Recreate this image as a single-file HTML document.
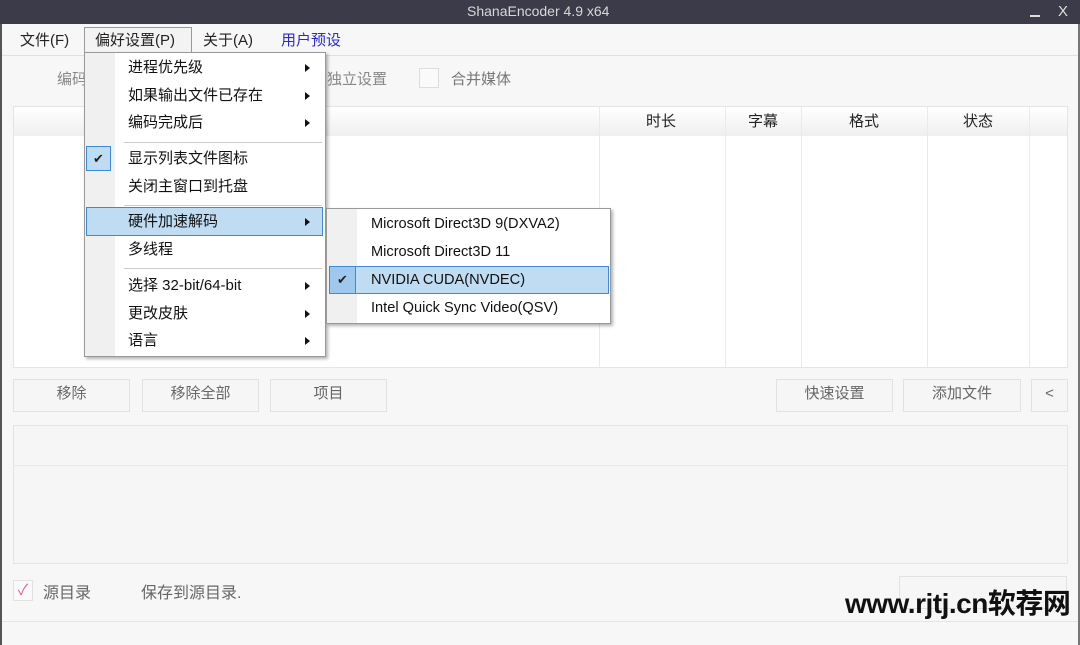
<!DOCTYPE html>
<html><head><meta charset="utf-8"><style>
*{margin:0;padding:0;box-sizing:border-box}
body{width:1080px;height:645px;background:#f7f7f7;font-family:"Liberation Sans","Noto Sans CJK SC",sans-serif;position:relative;overflow:hidden;color:#222}
.a{position:absolute}
.t{font-size:15px;white-space:nowrap}
.btn{position:absolute;top:379px;height:33px;border:1px solid #e2e2e2;background:#f6f6f6;color:#666;font-size:15px;text-align:center;line-height:28px}
.mi{position:absolute;left:128px;font-size:15px;color:#111;white-space:nowrap}
.ar{position:absolute;left:305px;width:0;height:0;border-top:4px solid transparent;border-bottom:4px solid transparent;border-left:5px solid #111}
.sep{position:absolute;left:124px;width:198px;height:1px;background:#ccc}
.si{position:absolute;left:371px;font-size:14.6px;color:#111;white-space:nowrap}
.col{position:absolute;top:106px;width:1px;height:261px;background:#eaeaea}
.hd{position:absolute;top:110px;font-size:15px;color:#222}
</style></head><body>
<div class="a" style="left:0;top:0;width:1080px;height:24px;background:#3b3b49"></div>
<div class="a t" style="left:467px;top:3px;color:#d8d8d8;font-size:14px">ShanaEncoder 4.9 x64</div>
<div class="a" style="left:1030px;top:15px;width:10px;height:2px;background:#ddd"></div>
<div class="a t" style="left:1058px;top:3px;color:#ddd;font-size:15px">X</div>
<div class="a" style="left:0;top:24px;width:2px;height:621px;background:#555"></div>
<div class="a" style="left:1078px;top:24px;width:2px;height:621px;background:#777"></div>
<div class="a" style="left:2px;top:55px;width:1076px;height:1px;background:#e0e0e0"></div>
<div class="a t" style="left:20px;top:29px">文件(F)</div>
<div class="a" style="left:84px;top:27px;width:108px;height:26px;border:1px solid #999;border-bottom:none;background:#f3f3f3"></div>
<div class="a t" style="left:95px;top:29px">偏好设置(P)</div>
<div class="a t" style="left:203px;top:29px">关于(A)</div>
<div class="a t" style="left:281px;top:29px;color:#2a2ad0">用户预设</div>
<div class="a t" style="left:57px;top:68px;color:#888">编码</div>
<div class="a t" style="left:327px;top:68px;color:#888">独立设置</div>
<div class="a" style="left:419px;top:68px;width:20px;height:20px;border:1px solid #ddd;background:#fafafa"></div>
<div class="a t" style="left:451px;top:68px;color:#777">合并媒体</div>
<div class="a" style="left:13px;top:106px;width:1055px;height:262px;border:1px solid #e4e4e4;background:#fff"></div>
<div class="a" style="left:14px;top:107px;width:1053px;height:29px;background:linear-gradient(#fff,#efefef)"></div>
<div class="col" style="left:599px"></div><div class="col" style="left:725px"></div><div class="col" style="left:801px"></div><div class="col" style="left:927px"></div><div class="col" style="left:1029px"></div>
<div class="hd" style="left:646px">时长</div><div class="hd" style="left:748px">字幕</div><div class="hd" style="left:849px">格式</div><div class="hd" style="left:963px">状态</div>
<div class="btn" style="left:13px;width:117px">移除</div>
<div class="btn" style="left:142px;width:117px">移除全部</div>
<div class="btn" style="left:270px;width:117px">项目</div>
<div class="btn" style="left:776px;width:117px">快速设置</div>
<div class="btn" style="left:903px;width:118px">添加文件</div>
<div class="btn" style="left:1031px;width:37px">&lt;</div>
<div class="a" style="left:13px;top:425px;width:1055px;height:139px;border:1px solid #e4e4e4;background:#f6f6f6"></div>
<div class="a" style="left:14px;top:465px;width:1053px;height:1px;background:#e8e8e8"></div>
<div class="a" style="left:13px;top:580px;width:20px;height:21px;border:1px solid #e2e2e2;background:#fafafa;color:#e060a0;font-size:15px;text-align:center;line-height:19px">✓</div>
<div class="a t" style="left:43px;top:579px;color:#666;font-size:16px">源目录</div>
<div class="a t" style="left:141px;top:579px;color:#666;font-size:16px">保存到源目录.</div>
<div class="a" style="left:899px;top:576px;width:168px;height:33px;border:1px solid #e2e2e2;background:#f6f6f6"></div>
<div class="a" style="left:2px;top:621px;width:1076px;height:1px;background:#e6e6e6"></div>
<div class="a" style="left:845px;top:582px;font-size:28px;font-weight:bold;color:#111;white-space:nowrap;letter-spacing:-0.5px">www.rjtj.cn软荐网</div>
<div class="a" style="left:84px;top:52px;width:242px;height:305px;border:1px solid #999;background:#fff;box-shadow:2px 2px 3px rgba(0,0,0,.3)"></div>
<div class="a" style="left:85px;top:53px;width:30px;height:303px;background:#f0f0f0"></div>
<div class="mi" style="top:56px">进程优先级</div><div class="ar" style="top:64px"></div>
<div class="mi" style="top:84px">如果输出文件已存在</div><div class="ar" style="top:92px"></div>
<div class="mi" style="top:111px">编码完成后</div><div class="ar" style="top:119px"></div>
<div class="sep" style="top:142px"></div>
<div class="a" style="left:86px;top:146px;width:25px;height:25px;border:1px solid #3d8ad6;background:#c0dcf3;font-size:13px;text-align:center;line-height:23px">✔</div>
<div class="mi" style="top:147px">显示列表文件图标</div>
<div class="mi" style="top:175px">关闭主窗口到托盘</div>
<div class="sep" style="top:205px"></div>
<div class="a" style="left:86px;top:207px;width:237px;height:29px;border:1px solid #3d8ad6;background:#c0dcf3"></div>
<div class="mi" style="top:210px">硬件加速解码</div><div class="ar" style="top:218px"></div>
<div class="mi" style="top:238px">多线程</div>
<div class="sep" style="top:268px"></div>
<div class="mi" style="top:274px">选择 32-bit/64-bit</div><div class="ar" style="top:282px"></div>
<div class="mi" style="top:302px">更改皮肤</div><div class="ar" style="top:310px"></div>
<div class="mi" style="top:329px">语言</div><div class="ar" style="top:337px"></div>
<div class="a" style="left:326px;top:208px;width:285px;height:116px;border:1px solid #999;background:#fff;box-shadow:2px 2px 3px rgba(0,0,0,.3)"></div>
<div class="a" style="left:327px;top:209px;width:30px;height:114px;background:#f0f0f0"></div>
<div class="si" style="top:216px">Microsoft Direct3D 9(DXVA2)</div>
<div class="si" style="top:244px">Microsoft Direct3D 11</div>
<div class="a" style="left:329px;top:266px;width:280px;height:28px;border:1px solid #3d8ad6;background:#c0dcf3"></div>
<div class="a" style="left:329px;top:266px;width:27px;height:28px;border:1px solid #3d8ad6;background:#9ec8ee;font-size:13px;text-align:center;line-height:26px">✔</div>
<div class="si" style="top:272px">NVIDIA CUDA(NVDEC)</div>
<div class="si" style="top:300px">Intel Quick Sync Video(QSV)</div>
</body></html>
